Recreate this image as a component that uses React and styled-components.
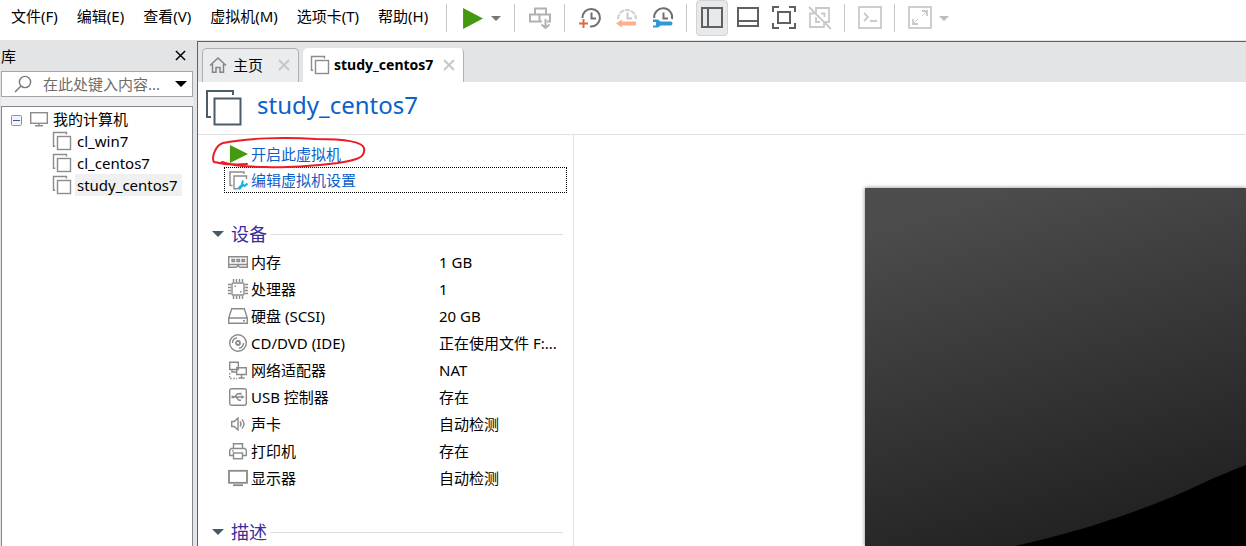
import React from "react";
import styled, { createGlobalStyle } from "styled-components";

const GlobalStyle = createGlobalStyle`
  *, *::before, *::after { box-sizing: border-box; }
  body { margin: 0; background: #fff; }
  button, input, table {
    font: inherit;
    color: inherit;
  }
  button { padding: 0; border: 0; background: none; }
  svg { display: block; flex: none; }
`;

const Window = styled.div`
  display: flex;
  flex-direction: column;
  min-height: 100vh;
  font: 15px/20px "Noto Sans", "Noto Sans CJK SC", sans-serif;
  color: #000;
  background: #fff;
`;

/* Menu and tool bar */
const TopBar = styled.header`
  display: flex;
  height: 40px;
  background: #fff;
`;

const MenuBar = styled.nav`
  display: flex;
  height: 32px;
  padding: 0 2px;
`;

const MenuItem = styled.button`
  padding: 0 10px 0 9px;
  white-space: nowrap;
`;

const ToolBar = styled.div`
  display: flex;
  align-items: center;
  height: 36px;
`;

const Separator = styled.span`
  width: 1px;
  height: 28px;
  margin: 0 7px 0 6px;
  background: #c8c8c8;
`;

const ToolButton = styled.button`
  display: flex;
  align-items: center;
  justify-content: center;
  width: 32px;
  height: 36px;
  margin: 0 2px;
  border: 1px solid ${(p) => (p.$active ? "#d2d3d5" : "transparent")};
  border-radius: 4px;
  background: ${(p) => (p.$active ? "#e8e9eb" : "transparent")};
`;

const MenuArrow = styled.button`
  display: flex;
  align-items: center;
  justify-content: center;
  width: 12px;
  height: 36px;
  margin-right: 6px;
`;

const Body = styled.div`
  display: flex;
  flex: 1;
  background: #e3e4e6;
`;

/* Library */
const Library = styled.aside`
  display: flex;
  flex-direction: column;
  width: 197px;
  padding: 0 4px 0 1px;
`;

const LibraryTitle = styled.div`
  display: flex;
  align-items: center;
  justify-content: space-between;
  height: 31px;
  padding-right: 7px;
`;

const SearchBox = styled.div`
  display: flex;
  align-items: center;
  gap: 11px;
  height: 26px;
  padding: 0 5px 0 12px;
  border: 1px solid #a3a5a8;
  background: #fff;
`;

const SearchInput = styled.input`
  flex: 1;
  min-width: 0;
  padding: 0;
  border: 0;
  outline: 0;
  background: none;
  &::placeholder { color: #6d6d6d; opacity: 1; }
`;

const TreeBox = styled.div`
  flex: 1;
  padding: 1px 0 0 9px;
  border: 1px solid #828790;
  border-bottom: 0;
  background: #fff;
`;

const TreeGap = styled.div`
  height: 9px;
  background: #efeff0;
`;

const TreeList = styled.ul`
  margin: 0;
  padding: 0 0 0 ${(p) => (p.$nested ? "41px" : "0")};
  list-style: none;
`;

const TreeRow = styled.div`
  display: flex;
  align-items: center;
  height: 22px;
`;

const TreeToggle = styled.button`
  padding-top: 3px;
  margin-right: 7px;
`;

const TreeLabel = styled.span`
  padding: 1px 4px 1px 2px;
  margin-left: ${(p) => (p.$root ? "2px" : "3px")};
  background: ${(p) => (p.$selected ? "#f0f0f0" : "transparent")};
`;

/* Main area */
const Main = styled.main`
  display: flex;
  flex: 1;
  flex-direction: column;
  min-width: 0;
  margin-top: 1px;
  border-top: 1px solid #5f6164;
  border-left: 1px solid #5f6164;
  background: #fff;
`;

const TabStrip = styled.div`
  display: flex;
  align-items: flex-end;
  gap: 4px;
  height: 40px;
  padding-left: 4px;
  background: #e3e4e6;
`;

const TabItem = styled.div`
  display: flex;
  align-items: center;
  height: 34px;
  padding: 0 8px 2px 6px;
  border: 1px solid ${(p) => (p.$active ? "#fff" : "#aeb0b4")};
  border-right-color: #aeb0b4;
  border-bottom: 0;
  border-radius: 5px 5px 0 0;
  background: ${(p) => (p.$active ? "#fff" : "#ebecee")};
`;

const TabButton = styled.button`
  display: flex;
  align-items: center;
  gap: ${(p) => (p.$active ? "4px" : "6px")};
  margin-right: ${(p) => (p.$active ? "10px" : "15px")};
  font-size: ${(p) => (p.$active ? "14px" : "15px")};
  font-weight: ${(p) => (p.$active ? "700" : "400")};
`;

const MachineHeader = styled.div`
  display: flex;
  align-items: center;
  gap: 15px;
  height: 53px;
  padding: 0 0 2px 7px;
  border-bottom: 1px solid #e2e2e2;
`;

const MachineName = styled.h1`
  margin: 0;
  padding-bottom: 4px;
  font-size: 24px;
  line-height: 32px;
  font-weight: 400;
  color: #0b61ca;
`;

const Columns = styled.div`
  display: flex;
  flex: 1;
`;

const Details = styled.section`
  width: 376px;
  padding: 6px 6px 0 14px;
  border-right: 1px solid #e2e2e2;
`;

const Commands = styled.div`
  position: relative;
  display: flex;
  flex-direction: column;
  margin-left: 12px;
`;

const Command = styled.a`
  display: flex;
  align-items: center;
  gap: 3px;
  height: 26px;
  padding-left: 4px;
  border: 1px dotted ${(p) => (p.$focused ? "#000" : "transparent")};
  color: #0b61ca;
  text-decoration: none;
`;

const PenMark = styled.svg`
  position: absolute;
  left: -13px;
  top: -5px;
  pointer-events: none;
`;

const SectionTitle = styled.h2`
  display: flex;
  align-items: center;
  gap: 7px;
  height: 28px;
  margin: 27px 4px 0 0;
  font-size: 18px;
  line-height: 26px;
  font-weight: 400;
  color: #3a2c9c;
  &::after {
    content: "";
    flex: 1;
    height: 1px;
    margin-left: -4px;
    background: #dfdfdf;
  }
`;

const DeviceTable = styled.table`
  width: 100%;
  border-collapse: collapse;
  table-layout: fixed;
`;

const DeviceName = styled.th`
  width: 227px;
  height: 27px;
  padding: 0 0 0 16px;
  font-weight: 400;
  text-align: left;
`;

const DeviceLabel = styled.span`
  display: flex;
  align-items: center;
  gap: 3px;
`;

const DeviceValue = styled.td`
  height: 27px;
  padding: 0;
  white-space: nowrap;
`;

const PreviewPane = styled.section`
  display: flex;
  flex: 1;
  min-width: 0;
  padding: 53px 0 0 291px;
`;

const Preview = styled.div`
  flex: 1;
  min-width: 0;
  height: 358px;
  overflow: hidden;
  background: #000;
  box-shadow: 0 0 4px rgba(0, 0, 0, 0.5);
`;

const Arrow = ({ w = 10, h = 5, color = "#777" }) => (
  <svg width={w} height={h} viewBox="0 0 10 5" preserveAspectRatio="none" aria-hidden="true">
    <path d="M0 0H10L5 5Z" fill={color} />
  </svg>
);

const Play = ({ w, h }) => (
  <svg width={w} height={h} viewBox="0 0 20 20" preserveAspectRatio="none" aria-hidden="true">
    <path d="M1 0L20 10L1 20Z" fill="#459910" />
  </svg>
);

const Cross = ({ size, color, width = 1.6 }) => (
  <svg width={size} height={size} viewBox="0 0 12 12" aria-hidden="true">
    <path d="M1 1L11 11M11 1L1 11" stroke={color} strokeWidth={width} />
  </svg>
);

const Icon = ({ size = 24, color = "#5f6063", sw = 1.6, children }) => (
  <svg
    width={size}
    height={size}
    viewBox={`0 0 ${size} ${size}`}
    fill="none"
    stroke={color}
    strokeWidth={sw}
    aria-hidden="true"
  >
    {children}
  </svg>
);

const Machine = ({ size = 20, color = "#8c8c8c" }) => (
  <svg width={size} height={size} viewBox="0 0 20 20" fill="none" stroke={color} strokeWidth="1.4" aria-hidden="true">
    <path d="M3.2 15.2H1.5V1.5H14.5V3.5" />
    <rect x="5.5" y="5.5" width="13" height="13" />
  </svg>
);

const toolGroups = [
  [{
    label: "发送 Ctrl+Alt+Del",
    icon: (
      <Icon color="#b1b1b1" sw={2}>
        <path d="M7 8.5V2.5H18V8.5M2 8.5H11.5V15.5H2ZM11.5 8.5H22V15.5H19M11.5 15.5H14" />
        <path d="M17.5 13V22M13.5 18.5L17.5 22L21.5 18.5" />
      </Icon>
    ),
  }],
  [
    {
      label: "拍摄快照",
      icon: (
        <Icon>
          <path d="M4.4 12A8.8 8.8 0 1 1 12 20.4" stroke="#6f7073" strokeWidth="2" />
          <path d="M13.5 6.5V12.5H18" stroke="#6f7073" strokeWidth="2" />
          <path d="M5.5 13V22M1 17.5H10" stroke="#dd6a3c" strokeWidth="2" />
        </Icon>
      ),
    },
    {
      label: "恢复快照",
      icon: (
        <Icon>
          <path d="M4 13A9 9 0 0 1 22 13" stroke="#cfcfcf" strokeWidth="2" strokeDasharray="5 1" />
          <path d="M13.5 6.5V12.5H18" stroke="#c8c8c8" strokeWidth="2" />
          <path d="M2 17.5L8 13.5V15.5H22V19.5H8V21.5Z" fill="#ffb08a" stroke="none" />
        </Icon>
      ),
    },
    {
      label: "管理快照",
      icon: (
        <Icon>
          <path d="M4.2 12A9 9 0 1 1 22 13" stroke="#6f7073" strokeWidth="2" />
          <path d="M13.5 6.5V12.5H18" stroke="#6f7073" strokeWidth="2" />
          <path d="M3 13.5H8L10.5 15.5H20.5A2 2 0 0 1 20.5 19.5H10.5L8 21.5H3V19.5H6V16H3Z" fill="#2d9ad6" stroke="none" />
        </Icon>
      ),
    },
  ],
  [
    {
      label: "显示库",
      active: true,
      icon: (
        <Icon sw={2}>
          <rect x="2" y="2" width="20" height="19" />
          <path d="M8 2V21" />
        </Icon>
      ),
    },
    {
      label: "缩略图栏",
      icon: (
        <Icon sw={2}>
          <rect x="2" y="2" width="20" height="18" />
          <path d="M2 15H22" />
        </Icon>
      ),
    },
    {
      label: "全屏",
      icon: (
        <Icon sw={2}>
          <path d="M1 6V1H7M17 1H23V6M23 17V22H17M7 22H1V17" />
          <rect x="6" y="6" width="12" height="11" />
        </Icon>
      ),
    },
    {
      label: "Unity",
      icon: (
        <Icon color="#c9c9c9" sw={1.8}>
          <path d="M8 7V2H21V16H17M13 7.5H16.5V11M7 7.5H2V21H16V17M8 11V16H12M1 1L23 23" />
        </Icon>
      ),
    },
  ],
  [{
    label: "控制台",
    icon: (
      <Icon color="#c9c9c9" sw={1.8}>
        <rect x="1" y="1" width="22" height="21" />
        <path d="M6 7L10 11L6 15M12 15H19" />
      </Icon>
    ),
  }],
  [{
    label: "拉伸",
    icon: (
      <Icon color="#c9c9c9" sw={1.8}>
        <rect x="1" y="1" width="22" height="21" />
        <path d="M14 5H19V10M5 13V18H10" />
        <path d="M18 6L14 10M6 17L10 13" strokeWidth="1" />
      </Icon>
    ),
  }],
];

const deviceIcons = {
  memory: (
    <>
      <path d="M.7 4.7H19.3V15.3H12L10 13.7L8 15.3H.7ZM1 12.5H19" />
      <path d="M4 7.5H6.5V9.5H4ZM9 7.5H11.5V9.5H9ZM14 7.5H16.5V9.5H14Z" />
    </>
  ),
  cpu: (
    <>
      <rect x="4" y="4" width="12" height="12" rx="1" />
      <path d="M5.5 0V3M8.5 0V3M11.5 0V3M14.5 0V3M5.5 17V20M8.5 17V20M11.5 17V20M14.5 17V20M0 5.5H3M0 8.5H3M0 11.5H3M0 14.5H3M17 5.5H20M17 8.5H20M17 11.5H20M17 14.5H20" />
      <path d="M6.5 6.5H8V8H6.5ZM12 12H13.5V13.5H12Z" fill="#8a8a8a" stroke="none" />
    </>
  ),
  disk: (
    <>
      <path d="M3.7 2.8H16.3L19.3 12V17.2H.7V12ZM1 12H19" />
      <path d="M15 14.7H17" />
    </>
  ),
  disc: (
    <>
      <circle cx="10" cy="10" r="8.3" />
      <circle cx="10" cy="10" r="2" strokeWidth="1.8" />
      <path d="M4.5 10A5.5 5.5 0 0 1 9 4.7M15.5 10A5.5 5.5 0 0 1 11 15.3" />
    </>
  ),
  network: (
    <>
      <path d="M1.7 2.2H10.3V9.5H1.7ZM8.7 7.7H18.3V14.5H8.7ZM13.5 15V18M10.5 18H16.5M4 9.5V12H8" />
      <path d="M1.7 13V18.5H9" strokeDasharray="1.5 1.5" />
    </>
  ),
  usb: (
    <>
      <rect x="1.7" y="1.7" width="16.6" height="16.6" rx="2" />
      <path d="M4 10H14M6.5 10L9.5 6.8H12M8 10L11 13.2H13" />
      <path d="M13.5 8L16.5 10L13.5 12ZM3.5 8.7H6V11.3H3.5ZM11.5 5.7H13.5V7.7H11.5Z" fill="#8a8a8a" stroke="none" />
    </>
  ),
  sound: (
    <>
      <path d="M3.7 7.5H6.2L10 4V16L6.2 12.5H3.7Z" />
      <path d="M12 7.5Q14 10 12 12.5M14 5.5Q18 10 14 14.5" />
    </>
  ),
  printer: (
    <>
      <path d="M5.5 7.5V2.7H14.5V7.5M5.5 14.5H1.7V9L3.2 7.5H16.8L18.3 9V14.5H14.5" />
      <rect x="5.5" y="12" width="9" height="5.7" />
      <path d="M4 10H5.5" />
    </>
  ),
  display: (
    <>
      <rect x="1" y="2.8" width="18" height="12" strokeWidth="1.8" />
      <path d="M5 17.2H15" strokeWidth="1.8" />
    </>
  ),
};

const devices = [
  ["memory", "内存", "1 GB"],
  ["cpu", "处理器", "1"],
  ["disk", "硬盘 (SCSI)", "20 GB"],
  ["disc", "CD/DVD (IDE)", "正在使用文件 F:..."],
  ["network", "网络适配器", "NAT"],
  ["usb", "USB 控制器", "存在"],
  ["sound", "声卡", "自动检测"],
  ["printer", "打印机", "存在"],
  ["display", "显示器", "自动检测"],
];

const menus = ["文件(F)", "编辑(E)", "查看(V)", "虚拟机(M)", "选项卡(T)", "帮助(H)"];
const machines = ["cl_win7", "cl_centos7", "study_centos7"];

export default function App() {
  return (
    <Window>
      <GlobalStyle />
      <TopBar>
        <MenuBar>
          {menus.map((m) => <MenuItem key={m}>{m}</MenuItem>)}
        </MenuBar>
        <ToolBar>
          <Separator />
          <ToolButton aria-label="开机"><Play w={21} h={21} /></ToolButton>
          <MenuArrow aria-label="电源选项"><Arrow /></MenuArrow>
          {toolGroups.map((group, i) => (
            <React.Fragment key={i}>
              <Separator />
              {group.map((t) => (
                <ToolButton key={t.label} aria-label={t.label} $active={t.active}>{t.icon}</ToolButton>
              ))}
            </React.Fragment>
          ))}
          <MenuArrow aria-label="拉伸选项"><Arrow color="#bdbdbd" /></MenuArrow>
        </ToolBar>
      </TopBar>

      <Body>
        <Library>
          <LibraryTitle>
            <label htmlFor="library-search">库</label>
            <button aria-label="关闭库"><Cross size={11} color="#000" /></button>
          </LibraryTitle>
          <SearchBox>
            <Icon size={18} color="#777" sw={1.4}>
              <circle cx="11" cy="7" r="5.6" />
              <path d="M7 11L1 17" />
            </Icon>
            <SearchInput id="library-search" placeholder="在此处键入内容..." />
            <button aria-label="搜索选项"><Arrow w={12} h={6} color="#000" /></button>
          </SearchBox>
          <TreeGap />
          <TreeBox>
            <TreeList>
              <li>
                <TreeRow>
                  <TreeToggle aria-label="折叠">
                    <svg width="11" height="11" viewBox="0 0 11 11" aria-hidden="true">
                      <rect x=".5" y=".5" width="10" height="10" rx="1" fill="#f4f4f4" stroke="#919191" />
                      <path d="M2 5.5H9" stroke="#3a55b8" />
                    </svg>
                  </TreeToggle>
                  <Icon size={20} color="#8c8c8c" sw={1.4}>
                    <rect x="1.7" y="3.7" width="16.6" height="10.6" />
                    <path d="M10 14.5V16.5M6 16.7H14" />
                  </Icon>
                  <TreeLabel $root>我的计算机</TreeLabel>
                </TreeRow>
                <TreeList $nested>
                  {machines.map((m) => (
                    <li key={m}>
                      <TreeRow>
                        <Machine />
                        <TreeLabel $selected={m === "study_centos7"}>{m}</TreeLabel>
                      </TreeRow>
                    </li>
                  ))}
                </TreeList>
              </li>
            </TreeList>
          </TreeBox>
        </Library>

        <Main>
          <TabStrip>
            <TabItem>
              <TabButton>
                <Icon size={18} color="#858585" sw={1.5}>
                  <path d="M1 9.5L9 2L17 9.5M3.5 8V16.3H7V11.5H11V16.3H14.5V8" />
                </Icon>
                主页
              </TabButton>
              <button aria-label="关闭主页"><Cross size={12} color="#c6c6c8" width={1.8} /></button>
            </TabItem>
            <TabItem $active>
              <TabButton $active>
                <Machine />
                study_centos7
              </TabButton>
              <button aria-label="关闭 study_centos7"><Cross size={12} color="#c6c6c8" width={1.8} /></button>
            </TabItem>
          </TabStrip>
          <MachineHeader>
            <svg width="37" height="37" viewBox="0 0 37 37" fill="none" stroke="#4b5c69" strokeWidth="2" aria-hidden="true">
              <path d="M6 28H2V2H28V6" />
              <rect x="9.5" y="9.5" width="26" height="26" />
            </svg>
            <MachineName>study_centos7</MachineName>
          </MachineHeader>
          <Columns>
            <Details>
              <Commands>
                <Command href="#start">
                  <Play w={19} h={18} />
                  开启此虚拟机
                </Command>
                <Command href="#settings" $focused>
                  <Icon size={19} color="#8c8c8c" sw={1.4}>
                    <path d="M3.5 14.5H1V1H15V3M9 17.7H5V5H17.5V8" />
                    <path d="M9.5 18L14.5 13" stroke="#16b5dc" strokeWidth="3" />
                    <path d="M14 9.5L13 13L15.5 15L18.5 12.5" stroke="#16b5dc" strokeWidth="2" />
                  </Icon>
                  编辑虚拟机设置
                </Command>
                <PenMark width="158" height="34" viewBox="0 0 158 34" fill="none" stroke="#ec1c24" strokeWidth="2" strokeLinecap="round" aria-hidden="true">
                  <path d="M36 28C24 29 11 28 3 26C0 21 5 9 12 7C35 2 73 1 105 3C128 3 151 5 153 12C155 22 145 24 127 27C104 30 72 32 55 31C38 31 22 30 11 26" />
                </PenMark>
              </Commands>
              <SectionTitle><Arrow w={12} h={6} color="#445a67" />设备</SectionTitle>
              <DeviceTable>
                <tbody>
                  {devices.map(([icon, name, value]) => (
                    <tr key={icon}>
                      <DeviceName scope="row">
                        <DeviceLabel>
                          <Icon size={20} color="#8a8a8a" sw={1.4}>{deviceIcons[icon]}</Icon>
                          {name}
                        </DeviceLabel>
                      </DeviceName>
                      <DeviceValue>{value}</DeviceValue>
                    </tr>
                  ))}
                </tbody>
              </DeviceTable>
              <SectionTitle><Arrow w={12} h={6} color="#445a67" />描述</SectionTitle>
            </Details>
            <PreviewPane>
              <Preview>
                <svg width="100%" height="100%" viewBox="0 0 381 358" preserveAspectRatio="xMinYMin slice" aria-hidden="true">
                  <defs>
                    <linearGradient id="screen" gradientUnits="userSpaceOnUse" x1="12" y1="38" x2="110" y2="369">
                      <stop offset="0" stopColor="#4c4c4c" />
                      <stop offset="1" stopColor="#232323" />
                    </linearGradient>
                  </defs>
                  <path d="M0 0H381V277C366 283 353 288 338 295C316 306 292 315 268 324C230 338 190 349 150 358H0Z" fill="url(#screen)" />
                </svg>
              </Preview>
            </PreviewPane>
          </Columns>
        </Main>
      </Body>
    </Window>
  );
}
